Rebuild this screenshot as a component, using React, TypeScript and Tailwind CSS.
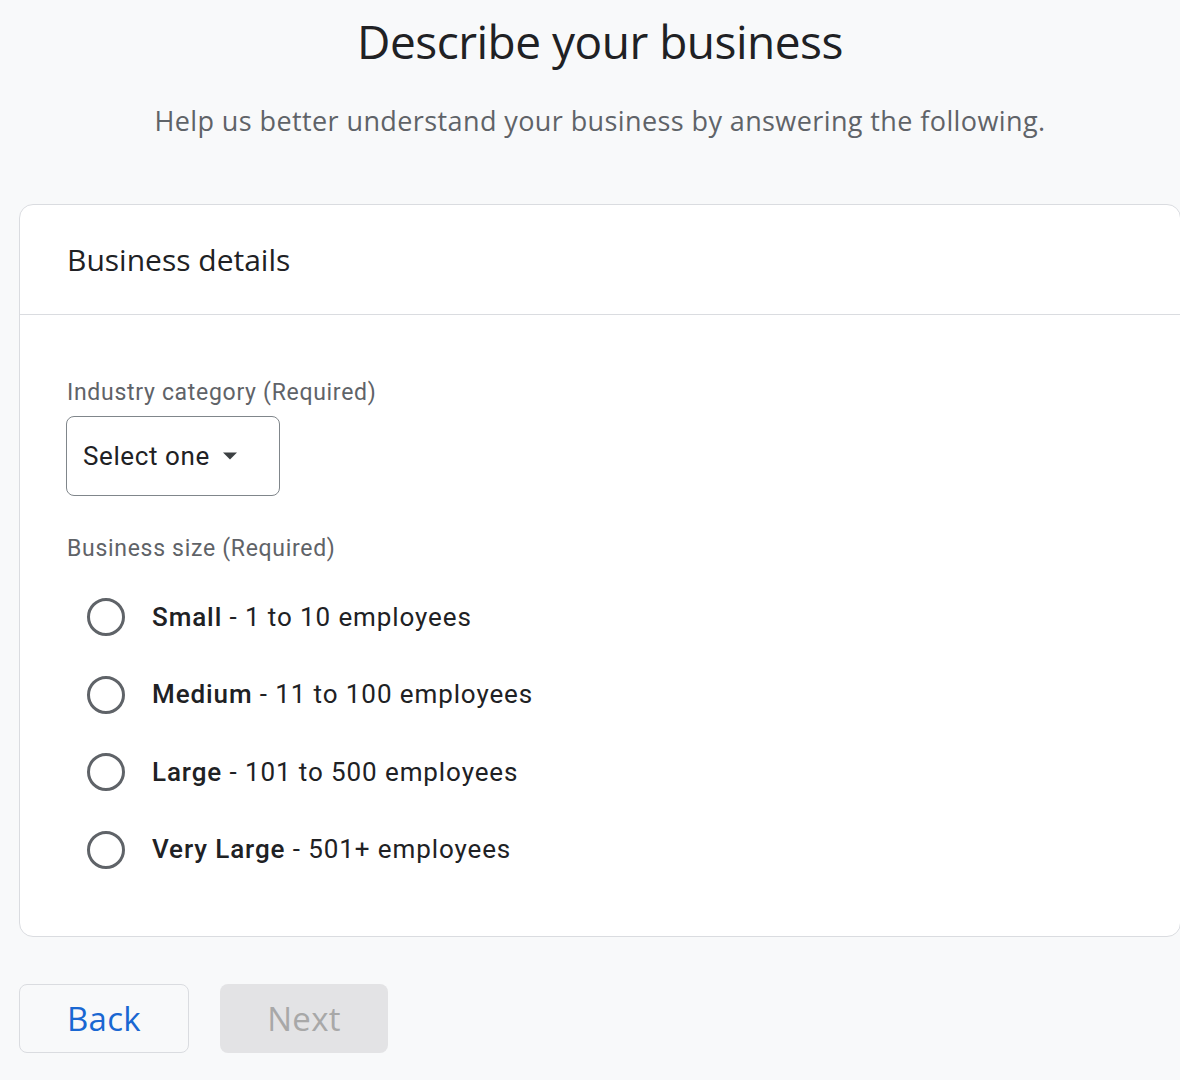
import React from "react";

const sizes = [
  { id: "small", label: "Small", range: "1 to 10 employees" },
  { id: "medium", label: "Medium", range: "11 to 100 employees" },
  { id: "large", label: "Large", range: "101 to 500 employees" },
  { id: "very-large", label: "Very Large", range: "501+ employees" },
];

export default function App() {
  return (
    <div className="w-full h-[1080px] overflow-hidden bg-[#f8f9fa] font-['Roboto',sans-serif]">
      <div className="ml-[19px] w-[1162px]">
        {/* Heading */}
        <h1 className="pt-[10px] text-center text-[46px] leading-[62px] text-[#202124] font-['Open_Sans',sans-serif] tracking-[-0.5px]">
          Describe your business
        </h1>
        <p className="mt-[31px] text-center text-[27px] leading-[36px] text-[#5f6368] font-['Open_Sans',sans-serif] tracking-[0.4px]">
          Help us better understand your business by answering the following.
        </p>

        {/* Card */}
        <div className="mt-[65px] h-[733px] bg-white border border-[#dadce0] rounded-[14px]">
          <div className="h-[110px] flex items-center px-[47px] border-b border-[#dadce0]">
            <h2 className="text-[30px] text-[#202124] font-['Open_Sans',sans-serif]">Business details</h2>
          </div>

          <div className="px-[46px] pt-[62px]">
            <label className="block pl-[1px] text-[23px] leading-[32px] text-[#5f6368] tracking-[0.7px]">
              Industry category (Required)
            </label>
            <button className="mt-[7px] w-[214px] h-[80px] flex items-center pl-[16px] gap-[12px] border border-[#80868b] rounded-[8px] bg-white">
              <span className="text-[26px] text-[#202124] tracking-[0.6px]">Select one</span>
              <svg width="16" height="10" viewBox="0 0 16 10">
                <path d="M1 1.5h14L8 8.5z" fill="#3c4043" />
              </svg>
            </button>

            <div className="mt-[37px] pl-[1px] text-[23px] leading-[32px] text-[#5f6368] tracking-[0.7px]">
              Business size (Required)
            </div>

            <div className="mt-[33px] flex flex-col gap-[39.5px] pl-[21px]">
              {sizes.map((s) => (
                <div key={s.id} className="flex items-center gap-[27px] h-[38px]">
                  <span className="w-[38px] h-[38px] rounded-full border-[3px] border-[#5f6368] shrink-0" />
                  <span className="text-[26px] text-[#202124] tracking-[0.9px]">
                    <span className="font-medium">{s.label}</span> - {s.range}
                  </span>
                </div>
              ))}
            </div>
          </div>
        </div>

        {/* Actions */}
        <div className="mt-[47px] flex gap-[31px]">
          <button className="w-[170px] h-[69px] rounded-[8px] border-[1.5px] border-[#dadce0] text-[33px] font-medium text-[#1967d2] font-['Open_Sans',sans-serif] tracking-[0.3px]">
            Back
          </button>
          <button className="w-[168px] h-[69px] rounded-[8px] bg-[#e3e3e5] text-[33px] font-medium text-[#a8a8a8] font-['Open_Sans',sans-serif] tracking-[0.3px]">
            Next
          </button>
        </div>
      </div>
    </div>
  );
}
